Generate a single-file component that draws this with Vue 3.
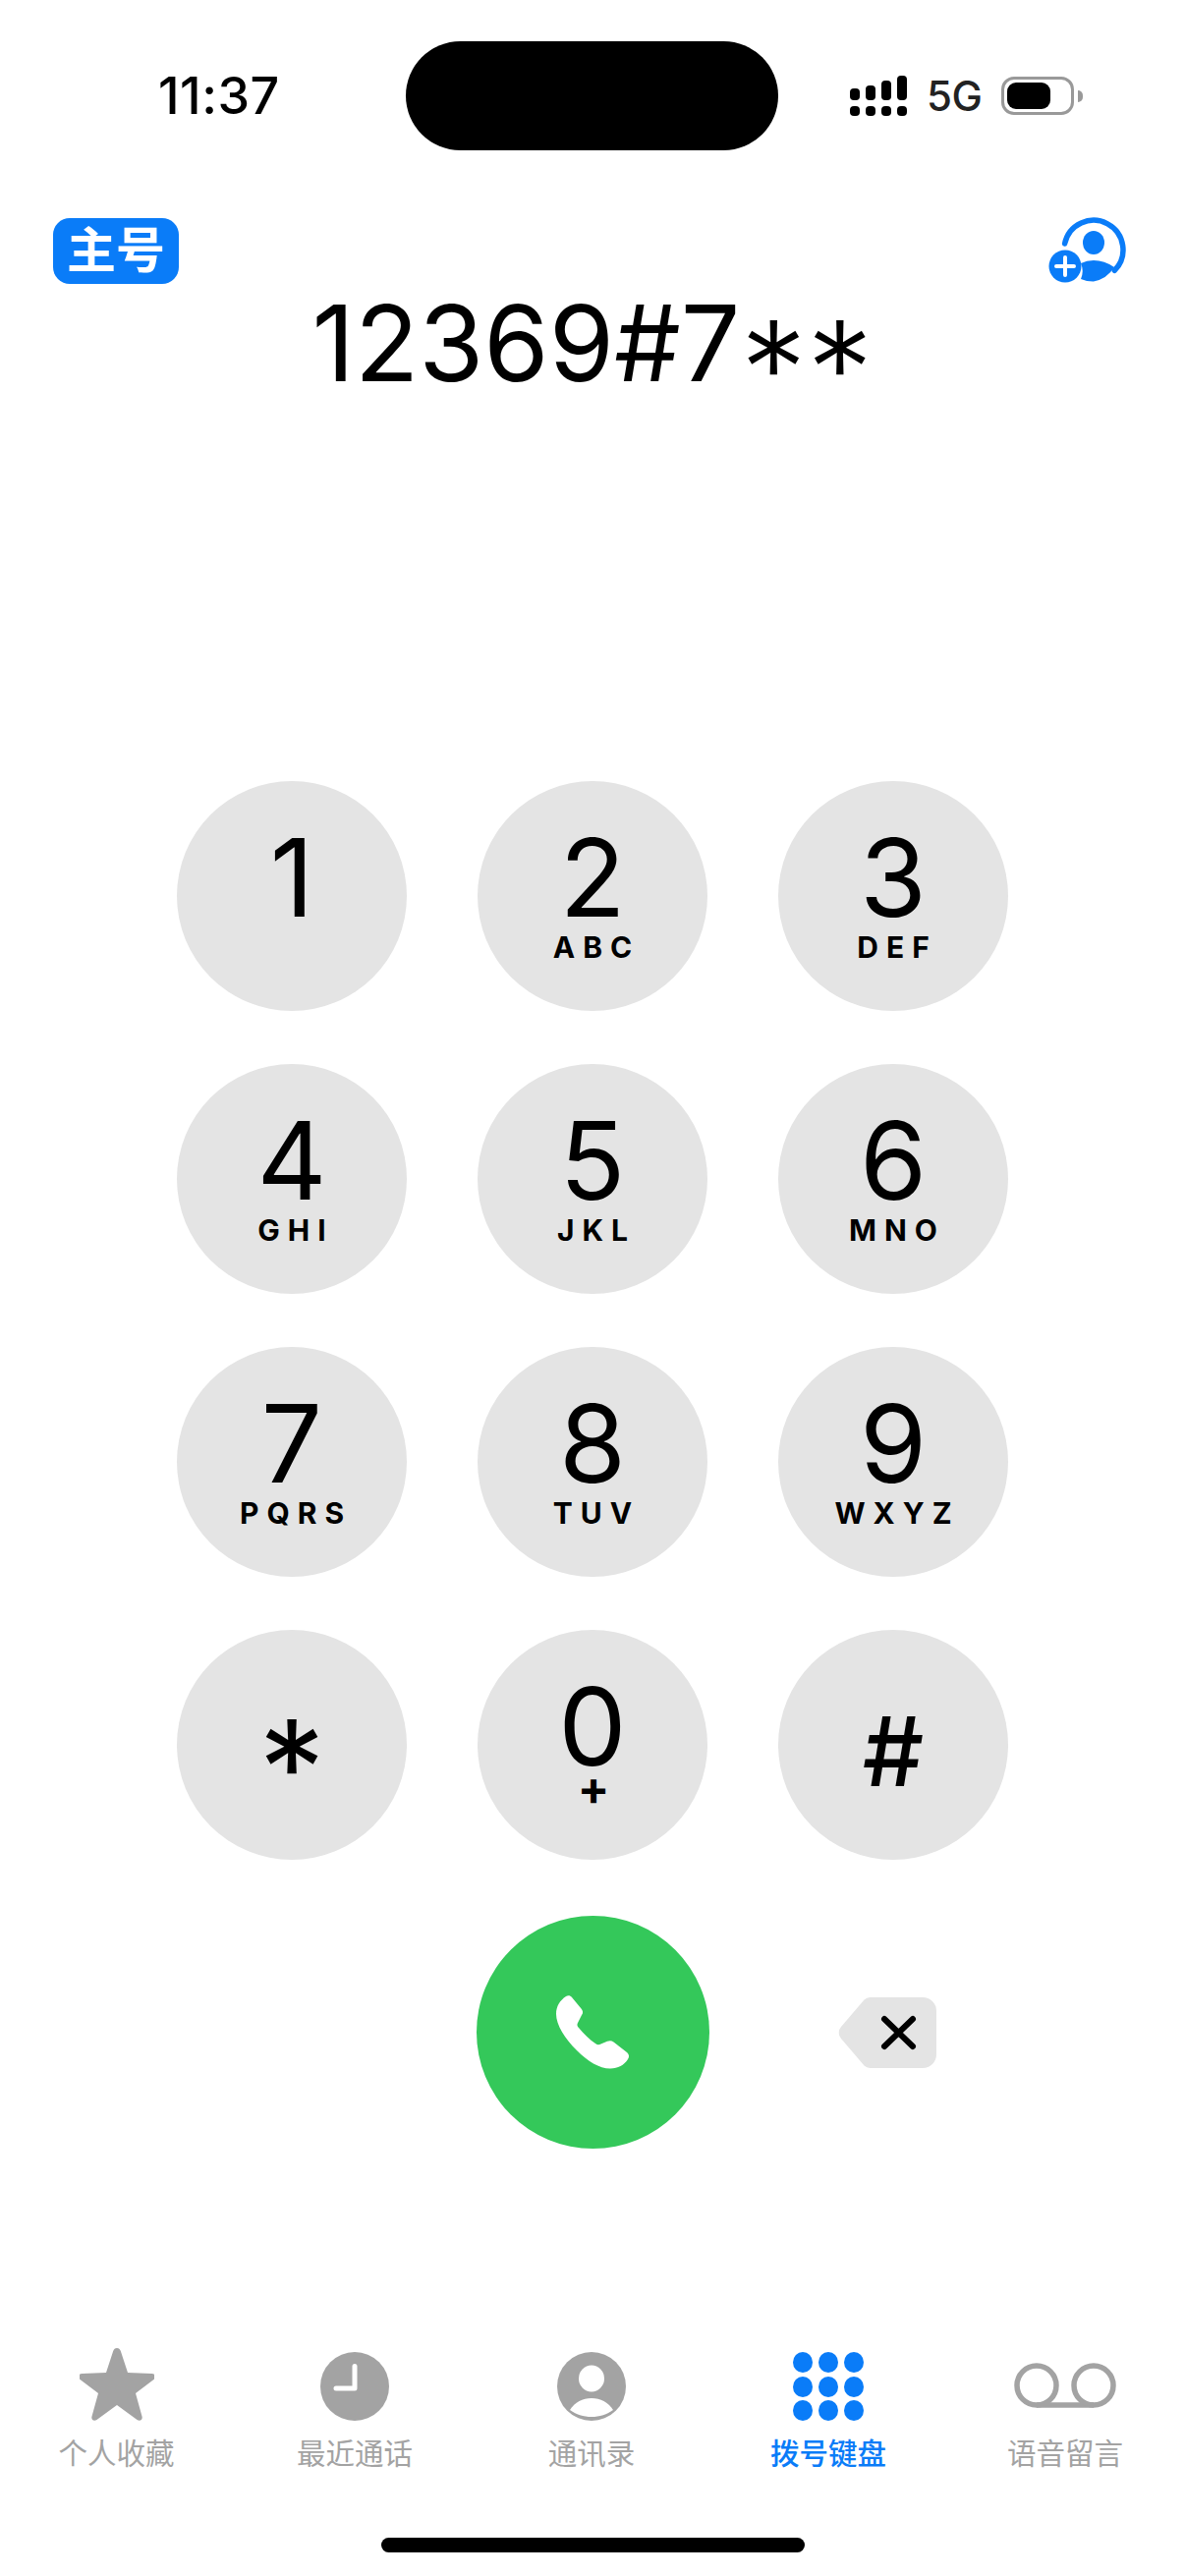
<script setup>
const keys = [
  { n: '1', s: '' },
  { n: '2', s: 'ABC' },
  { n: '3', s: 'DEF' },
  { n: '4', s: 'GHI' },
  { n: '5', s: 'JKL' },
  { n: '6', s: 'MNO' },
  { n: '7', s: 'PQRS' },
  { n: '8', s: 'TUV' },
  { n: '9', s: 'WXYZ' },
  { n: '*', s: '', cls: 'star' },
  { n: '0', s: '+', cls: 'zero' },
  { n: '#', s: '', cls: 'hash' },
]
const tabs = [
  { label: '个人收藏', icon: 'star' },
  { label: '最近通话', icon: 'clock' },
  { label: '通讯录', icon: 'person' },
  { label: '拨号键盘', icon: 'grid', active: true },
  { label: '语音留言', icon: 'voicemail' },
]
const signal = [12, 15, 20, 25]
</script>

<template>
  <div class="phone">
    <header class="status">
      <span class="time">11:37</span>
      <div class="island"></div>
      <div class="indicators">
        <div class="signal">
          <div v-for="(h, i) in signal" :key="i" class="bar">
            <i :style="{ height: h + 'px' }"></i>
            <i class="dot"></i>
          </div>
        </div>
        <span class="net">5G</span>
        <div class="battery">
          <div class="level"></div>
        </div>
        <div class="nub"></div>
      </div>
    </header>

    <div class="top-row">
      <span class="badge">主号</span>
      <svg class="add-contact" viewBox="0 0 80 70" width="80" height="70">
        <path d="M17.600 28A30 30 0 1 1 68.300 55.300" fill="none" stroke="#0a7cf8" stroke-width="5.500" stroke-linecap="round" />
        <ellipse cx="47" cy="27" rx="11" ry="12" fill="#0a7cf8" />
        <path d="M34 48Q40 45 47 45Q58 45 68 52A32 32 0 0 1 47 66.500A32 32 0 0 1 34 64A20 20 0 0 0 34 48z" fill="#0a7cf8" />
        <circle cx="18" cy="51" r="16.500" fill="#0a7cf8" />
        <path d="M18 42v18M9 51h18" stroke="#fff" stroke-width="4" stroke-linecap="round" />
      </svg>
    </div>

    <div class="number">12369#7<span class="ast">**</span></div>

    <div class="keypad">
      <button v-for="k in keys" :key="k.n" class="key" :class="k.cls">
        <span class="digit">{{ k.n }}</span>
        <span v-if="k.s" class="letters">{{ k.s }}</span>
      </button>
    </div>

    <div class="call-row">
      <div class="call">
        <svg viewBox="0 0 75 75" width="75" height="75">
          <path d="M10 1C12-.2 14.500 0 16 2L25.500 13.500C27.500 16 27.500 18 26 20L22 28C21 30 21.500 31.500 23 33C28 39 34 45 40 49C42 50.500 43.500 50.500 45.500 49.500L52 46.800C54.500 45.800 56.500 46 58.500 47.500L72 58C74.500 60 74.500 63 73 65C69 71 63 74.500 55 74.500C44 74.500 32 67 21 56C9 44 0 30 0 19C0 11 4 5 10 1Z" fill="#fff" />
        </svg>
      </div>
      <div class="backspace">
        <svg viewBox="0 0 100 72" width="100" height="72">
          <path d="M33 0h53a14 14 0 0 1 14 14v44a14 14 0 0 1-14 14H33a9 9 0 0 1-6.500-2.500L3 42a9 9 0 0 1 0-12L26.500 2.500A9 9 0 0 1 33 0z" fill="#e4e4e4" />
          <path d="M47 22l29 28M76 22L47 50" stroke="#000" stroke-width="6" stroke-linecap="round" />
        </svg>
      </div>
    </div>

    <nav class="tabs">
      <div v-for="t in tabs" :key="t.label" class="tab" :class="{ active: t.active }">
        <div class="tab-icon">
          <svg v-if="t.icon === 'star'" viewBox="0 0 76 74" width="76" height="74">
            <path d="M38 0c2 0 3 1 3.800 3l7.200 22l24.500 1c4 .2 5 3.500 2 6L57 46l6.500 23.500c1 3.500-2 5.500-5 3.500L38 58L17.500 73c-3 2-6 0-5-3.500L19 46L.5 32c-3-2.500-2-5.800 2-6l24.500-1l7.200-22C35 1 36 0 38 0z" fill="#a3a3a3" />
          </svg>
          <svg v-else-if="t.icon === 'clock'" viewBox="0 0 70 70" width="70" height="70">
            <circle cx="35" cy="35" r="35" fill="#a3a3a3" />
            <path d="M35 14.500V37H16" fill="none" stroke="#fff" stroke-width="5" stroke-linecap="round" stroke-linejoin="round" />
          </svg>
          <svg v-else-if="t.icon === 'person'" viewBox="0 0 70 70" width="70" height="70">
            <circle cx="35" cy="35" r="35" fill="#a3a3a3" />
            <ellipse cx="35" cy="27" rx="13" ry="13.500" fill="#fff" />
            <path d="M13 59c5-8 13-12 22-12s17 4 22 12c-6 4.500-14 7-22 7s-16-2.500-22-7z" fill="#fff" />
          </svg>
          <div v-else-if="t.icon === 'grid'" class="grid-icon">
            <i v-for="n in 9" :key="n"></i>
          </div>
          <svg v-else class="voicemail" viewBox="0 0 104 46" width="104" height="46">
            <path d="M23 43h58" stroke="#a3a3a3" stroke-width="5.500" fill="none" />
            <circle cx="23" cy="23" r="20" stroke="#a3a3a3" stroke-width="5.500" fill="none" />
            <circle cx="81" cy="23" r="20" stroke="#a3a3a3" stroke-width="5.500" fill="none" />
          </svg>
        </div>
        <span class="tab-label">{{ t.label }}</span>
      </div>
    </nav>

    <div class="home-bar"></div>
  </div>
</template>

<style scoped>
.phone {
  width: 1206px;
  height: 2622px;
  background: #fff;
  overflow: hidden;
  display: flex;
  flex-direction: column;
  font-family: Inter, "Noto Sans CJK SC", sans-serif;
  color: #000;
}
.status {
  height: 111px;
  margin-top: 42px;
  display: flex;
  align-items: center;
  padding-left: 161px;
}
.time {
  width: 252px;
  font-size: 52px;
  font-weight: 500;
  letter-spacing: 0.5px;
}
.island {
  width: 379px;
  height: 111px;
  background: #000;
  border-radius: 56px;
}
.indicators {
  display: flex;
  align-items: center;
  margin-left: 73px;
}
.signal {
  display: flex;
  gap: 6px;
  align-items: flex-end;
  height: 42px;
  margin-top: -1px;
}
.bar {
  display: flex;
  flex-direction: column;
  gap: 6px;
  width: 10px;
}
.bar i {
  display: block;
  background: #000;
  border-radius: 4px;
}
.bar i.dot {
  height: 10px;
}
.net {
  margin-left: 20px;
  font-size: 42px;
  font-weight: 500;
  color: #222;
  letter-spacing: -0.5px;
}
.battery {
  margin-left: 20px;
  width: 74px;
  height: 39px;
  box-sizing: border-box;
  border: 3px solid #999;
  border-radius: 13px;
  padding: 3px;
}
.level {
  width: 44px;
  height: 27px;
  background: #000;
  border-radius: 9px;
}
.nub {
  width: 5px;
  height: 12px;
  margin-left: 4px;
  background: #999;
  border-radius: 0 6px 6px 0;
}
.top-row {
  margin-top: 68px;
  padding: 0 60px 0 54px;
  height: 68px;
  display: flex;
  justify-content: space-between;
  align-items: center;
}
.badge {
  width: 128px;
  height: 67px;
  box-sizing: border-box;
  background: #0a7cf8;
  color: #fff;
  border-radius: 17px;
  font-size: 50px;
  font-weight: 700;
  line-height: 67px;
  text-align: center;
}
.number {
  margin-top: 10px;
  height: 100px;
  line-height: 100px;
  text-align: center;
  font-size: 107px;
  font-weight: 400;
  white-space: nowrap;
}
.ast {
  font-size: 135px;
  font-weight: 300;
  line-height: 0;
  vertical-align: -36px;
}
.keypad {
  margin: 396px 0 0 180px;
  display: grid;
  grid-template-columns: repeat(3, 234px);
  column-gap: 72px;
  row-gap: 54px;
}
.key {
  width: 234px;
  height: 234px;
  border: 0;
  padding: 54px 0 0;
  border-radius: 50%;
  background: #e4e4e4;
  color: #000;
  font-family: inherit;
  display: flex;
  flex-direction: column;
  align-items: center;
  justify-content: flex-start;
}
.digit {
  font-size: 110px;
  font-weight: 400;
  line-height: 88px;
}
.letters {
  margin-top: 12px;
  font-size: 30px;
  line-height: 30px;
  font-weight: 700;
  letter-spacing: 8px;
  padding-left: 8px;
}
.star .digit {
  font-size: 135px;
  font-weight: 400;
  padding-top: 42px;
}
.hash .digit {
  padding-top: 26px;
  font-size: 98px;
  font-weight: 500;
}
.zero .letters {
  margin-top: 4px;
  font-size: 48px;
  letter-spacing: 0;
  padding-left: 2px;
}
.call-row {
  margin: 57px 0 0 485px;
  display: flex;
  align-items: center;
}
.call {
  width: 237px;
  height: 237px;
  border-radius: 50%;
  background: #34c85a;
  display: flex;
  align-items: center;
  justify-content: center;
}
.backspace {
  margin-left: 131px;
  display: flex;
}
.tabs {
  margin-top: 203px;
  padding-right: 2px;
  display: grid;
  grid-template-columns: repeat(5, 241px);
  justify-content: center;
}
.tab {
  display: flex;
  flex-direction: column;
  align-items: center;
  color: #a3a3a3;
}
.tab:first-child {
  padding-right: 3px;
}
.tab.active {
  color: #0a7cf8;
}
.tab-icon {
  height: 74px;
  display: flex;
  align-items: flex-end;
  justify-content: center;
}
.voicemail {
  margin-bottom: 13px;
}
.grid-icon {
  display: grid;
  grid-template-columns: repeat(3, 20px);
  grid-auto-rows: 21px;
  gap: 3.500px 6px;
}
.grid-icon i {
  display: block;
  background: #0a7cf8;
  border-radius: 50%;
}
.tab-label {
  margin-top: 15px;
  font-size: 29.500px;
  line-height: 36px;
}
.tab.active .tab-label {
  font-weight: 500;
}
.home-bar {
  width: 431px;
  height: 15px;
  margin: 68px 0 0 388px;
  background: #000;
  border-radius: 8px;
}
</style>

<style>
html, body {
  margin: 0;
  background: #fff;
}
</style>
